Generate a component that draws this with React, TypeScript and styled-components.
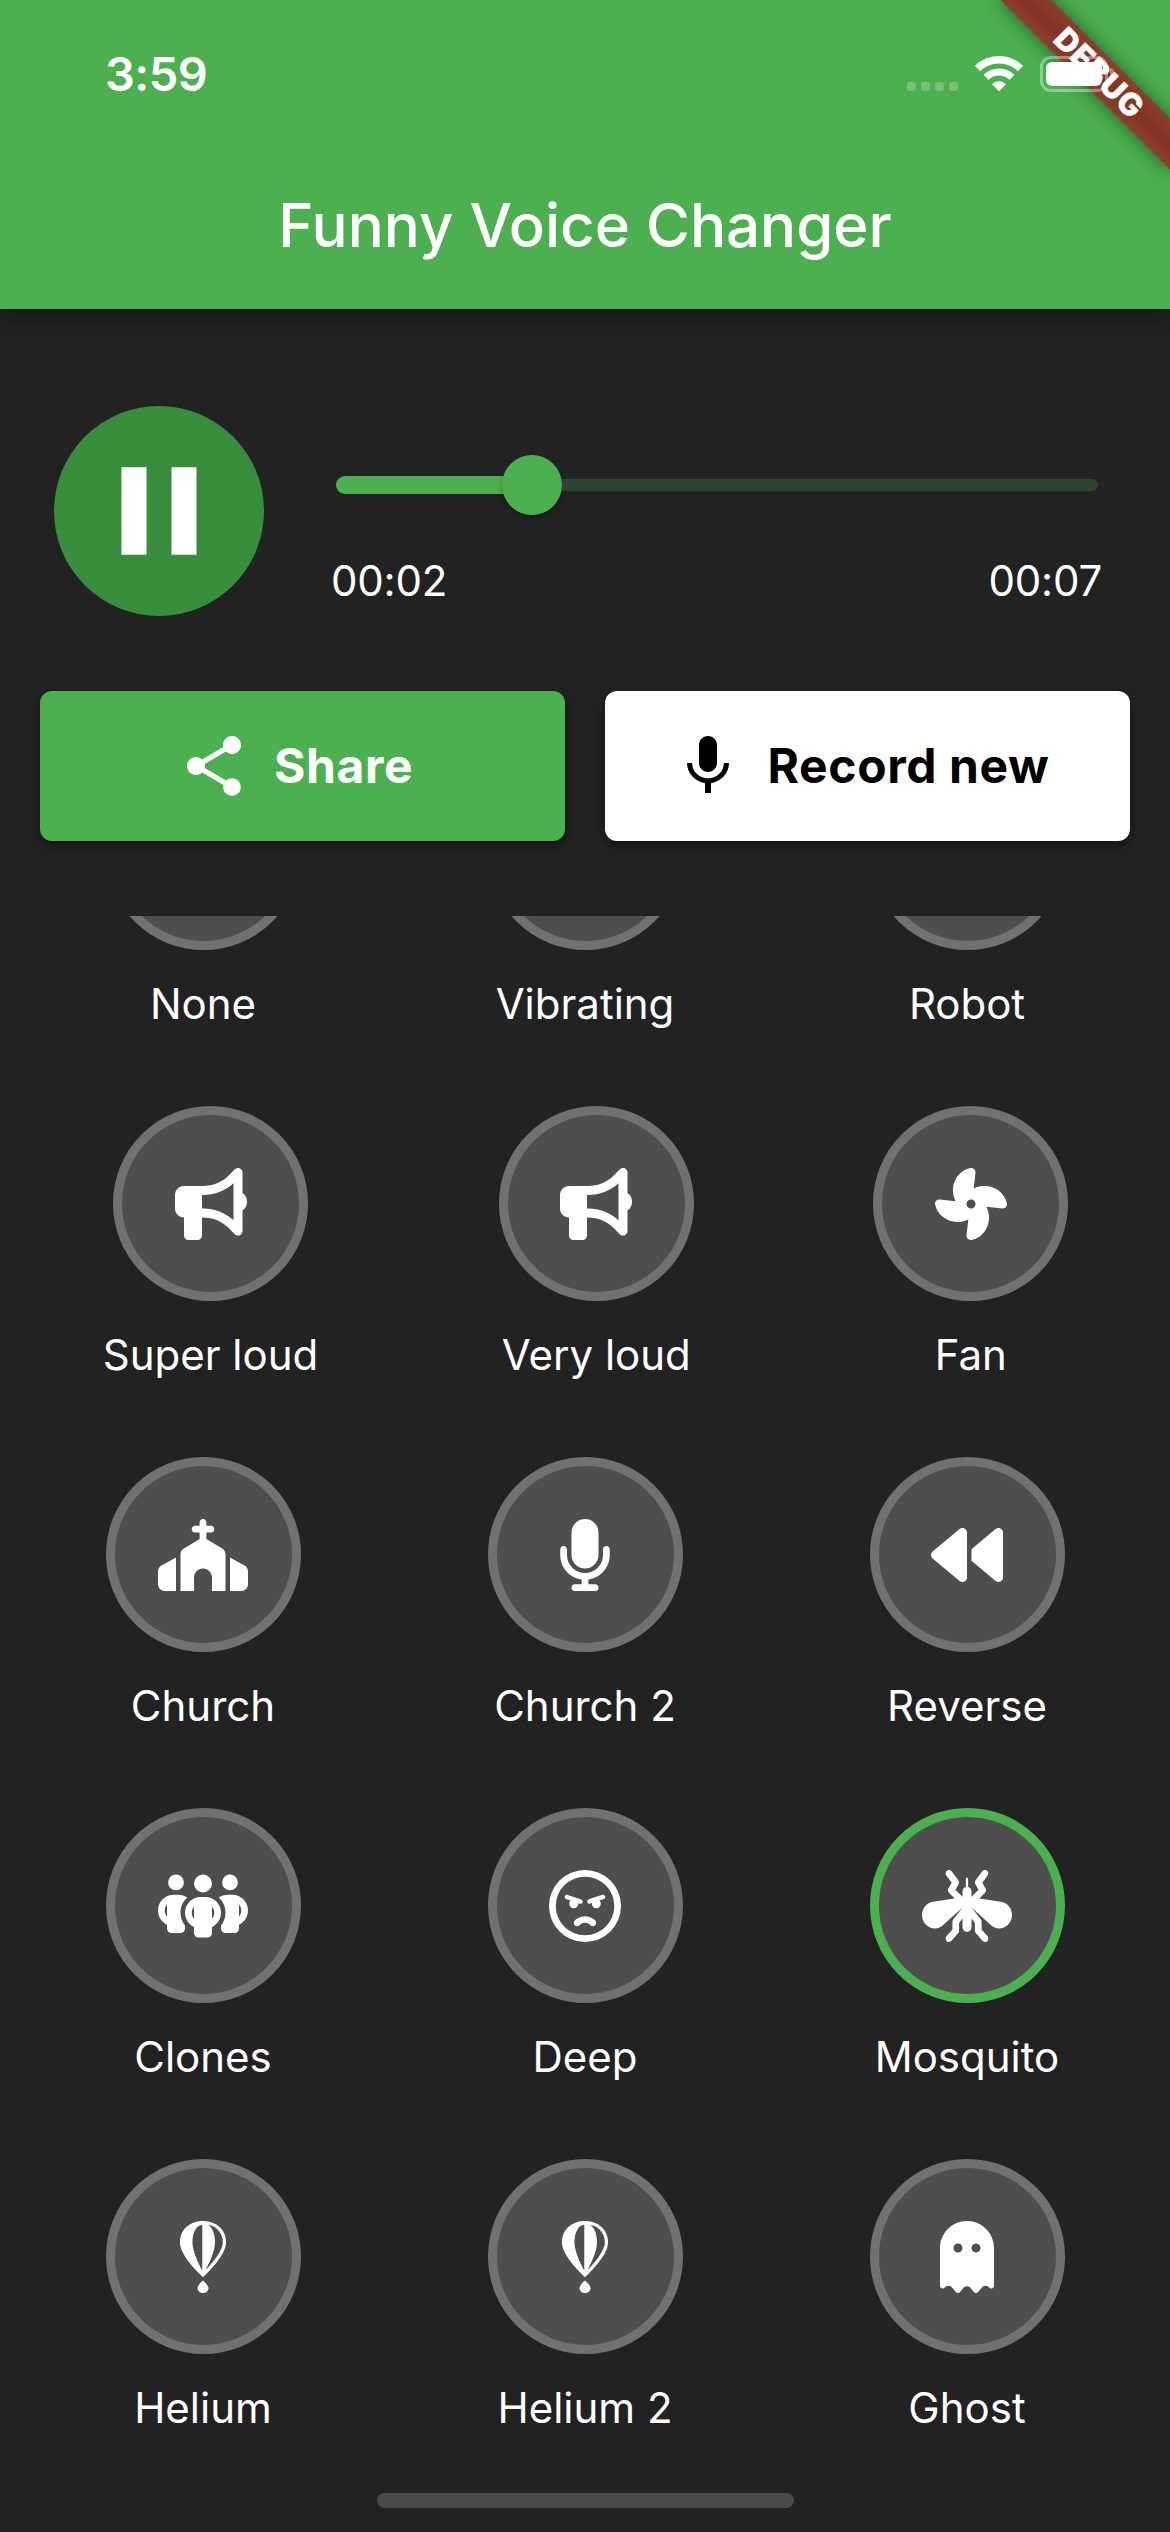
import React from 'react';
import styled, { createGlobalStyle } from 'styled-components';
import type { IconType } from 'react-icons';
import {
  FaBackward,
  FaBullhorn,
  FaChurch,
  FaFan,
  FaFly,
  FaGhost,
  FaMicrophone,
  FaMosquito,
  FaPeopleGroup,
  FaRegFaceAngry,
} from 'react-icons/fa6';

const colors = {
  green: '#4caf50',
  darkGreen: '#388e3c',
  background: '#222222',
  disc: '#4e4e4e',
  ring: '#717171',
};

const GlobalStyle = createGlobalStyle`
  * { box-sizing: border-box; }
  body { margin: 0; background: ${colors.background}; }
`;

const Screen = styled.div`
  position: relative;
  width: 1170px;
  height: 2532px;
  display: flex;
  flex-direction: column;
  overflow: hidden;
  background: ${colors.background};
  color: #fff;
  font-family: Inter, 'Liberation Sans', sans-serif;
`;

const Header = styled.header`
  height: 309px;
  flex: none;
  display: flex;
  flex-direction: column;
  background: ${colors.green};
  box-shadow: 0 6px 12px -3px rgba(0, 0, 0, 0.14), 0 12px 15px rgba(0, 0, 0, 0.08),
    0 3px 30px rgba(0, 0, 0, 0.08);
`;

const StatusBar = styled.div`
  position: relative;
  z-index: 2;
  height: 141px;
  display: flex;
  justify-content: space-between;
  padding: 46px 56px 0 105px;
`;

const Clock = styled.time`
  margin-top: -1px;
  font-size: 47px;
  line-height: 58px;
  font-weight: 600;
  letter-spacing: -0.6px;
`;

const StatusIcons = styled.div`
  display: flex;
  align-items: flex-end;
  height: 46px;
`;

const SignalDots = styled.div`
  display: flex;
  gap: 5px;
  margin: 0 16px 1px 0;
`;

const SignalDot = styled.i`
  width: 9px;
  height: 9px;
  border-radius: 3px;
  background: rgba(255, 255, 255, 0.23);
`;

const WifiGlyph = styled.svg`
  width: 50px;
  height: 37px;
  margin-right: 16px;
`;

const Battery = styled.div`
  width: 68px;
  height: 36px;
  padding: 3px;
  border: 3px solid rgba(255, 255, 255, 0.38);
  border-radius: 11px;
`;

const BatteryLevel = styled.div`
  width: 56px;
  height: 24px;
  border-radius: 6px;
  background: #fff;
`;

const BatteryTip = styled.i`
  width: 4px;
  height: 12px;
  margin: 0 0 12px 2px;
  border-radius: 0 4px 4px 0;
  background: rgba(255, 255, 255, 0.38);
`;

const Title = styled.h1`
  margin: 0;
  height: 168px;
  text-align: center;
  font-size: 60px;
  line-height: 168px;
  font-weight: 500;
  letter-spacing: 0;
`;

const DebugBanner = styled.div`
  position: absolute;
  z-index: 1;
  top: 54px;
  left: 978px;
  width: 240px;
  height: 36px;
  transform: rotate(45deg);
  background: linear-gradient(#894029, #823425 50%, #894029);
  box-shadow: 0 0 18px rgba(0, 0, 0, 0.5);
  text-align: center;
  text-indent: 3px;
  font-size: 31.5px;
  line-height: 36px;
  font-weight: 900;
  letter-spacing: 0.6px;
`;

const Player = styled.section`
  display: flex;
  padding: 97px 68px 0 54px;
  height: 382px;
  flex: none;
`;

const PlayButton = styled.button`
  width: 210px;
  height: 210px;
  padding: 0;
  border: 0;
  border-radius: 50%;
  display: grid;
  place-items: center;
  background: ${colors.darkGreen};
  svg {
    width: 150px;
    height: 150px;
    fill: #fff;
  }
`;

const Timeline = styled.div`
  flex: 1;
  margin-left: 67px;
  padding-top: 49px;
`;

const Slider = styled.div`
  display: flex;
  align-items: center;
  height: 60px;
  padding: 0 4px 0 5px;
`;

const Played = styled.div`
  width: 169px;
  height: 18px;
  border-radius: 9px 0 0 9px;
  background: ${colors.green};
`;

const Thumb = styled.div`
  width: 60px;
  height: 60px;
  margin-left: -3px;
  border-radius: 50%;
  background: ${colors.green};
  box-shadow: 0 3px 4px rgba(0, 0, 0, 0.28);
`;

const Remaining = styled.div`
  flex: 1;
  height: 12px;
  border-radius: 0 6px 6px 0;
  background: #2c432d;
`;

const Times = styled.div`
  display: flex;
  justify-content: space-between;
  margin-top: 41px;
  font-size: 42px;
  line-height: 50px;
  letter-spacing: -0.2px;
`;

const Actions = styled.section`
  display: grid;
  grid-template-columns: 1fr 1fr;
  gap: 40px;
  height: 225px;
  flex: none;
  padding: 0 40px;
`;

const ActionButton = styled.button<{ $primary?: boolean }>`
  height: 150px;
  border: 0;
  border-radius: 12px;
  padding: 0 14px 0 0;
  display: flex;
  align-items: center;
  justify-content: center;
  gap: 24px;
  background: ${(p) => (p.$primary ? colors.green : '#fff')};
  color: ${(p) => (p.$primary ? '#fff' : '#000')};
  box-shadow: 0 3px 6px rgba(0, 0, 0, 0.3), 0 6px 9px rgba(0, 0, 0, 0.15);
  font: 700 48px/58px Inter, 'Liberation Sans', sans-serif;
  letter-spacing: 0.6px;
  svg {
    width: 72px;
    height: 72px;
    fill: currentColor;
  }
`;

const Effects = styled.main`
  flex: 1;
  min-height: 0;
  overflow: hidden;
`;

const EffectList = styled.div`
  margin-top: -161px;
  padding: 0 12px;
`;

const EffectRow = styled.div`
  display: flex;
  justify-content: space-around;
  height: 351px;
`;

const Effect = styled.div`
  min-width: 195px;
  display: flex;
  flex-direction: column;
  align-items: center;
`;

const Disc = styled.div<{ $selected?: boolean }>`
  width: 195px;
  height: 195px;
  flex: none;
  display: grid;
  place-items: center;
  border-radius: 50%;
  border: 9px solid ${(p) => (p.$selected ? colors.green : colors.ring)};
  background: ${colors.disc};
  svg {
    width: 90px;
    height: 72px;
  }
`;

const Label = styled.span`
  margin-top: 29px;
  padding: 0 1px;
  font-size: 42px;
  line-height: 50px;
  letter-spacing: 0;
  white-space: nowrap;
`;

const HomeIndicator = styled.div`
  position: absolute;
  left: 377px;
  bottom: 24px;
  width: 417px;
  height: 15px;
  border-radius: 8px;
  background: #4a4a4a;
`;

type EffectItem = { name: string; icon?: IconType; selected?: boolean };

const rows: EffectItem[][] = [
  [{ name: 'None' }, { name: 'Vibrating' }, { name: 'Robot' }],
  [
    { name: 'Super loud', icon: FaBullhorn },
    { name: 'Very loud', icon: FaBullhorn },
    { name: 'Fan', icon: FaFan },
  ],
  [
    { name: 'Church', icon: FaChurch },
    { name: 'Church 2', icon: FaMicrophone },
    { name: 'Reverse', icon: FaBackward },
  ],
  [
    { name: 'Clones', icon: FaPeopleGroup },
    { name: 'Deep', icon: FaRegFaceAngry },
    { name: 'Mosquito', icon: FaMosquito, selected: true },
  ],
  [
    { name: 'Helium', icon: FaFly },
    { name: 'Helium 2', icon: FaFly },
    { name: 'Ghost', icon: FaGhost },
  ],
];

const Wifi = () => (
  <WifiGlyph viewBox="0 0 50 37" fill="none" stroke="#fff">
    <path d="M3.5 13.5C15.5 1.8 34.500 1.8 46.500 13.500" strokeWidth="7.500" />
    <path d="M12 22.300C19.500 15.200 30.500 15.200 38 22.300" strokeWidth="7" />
    <path d="M18 29.200C22 25.300 28 25.300 32 29.200L25 36.300Z" fill="#fff" stroke="none" />
  </WifiGlyph>
);

export default function App() {
  return (
    <Screen>
      <GlobalStyle />
      <Header>
        <StatusBar>
          <Clock>3:59</Clock>
          <StatusIcons>
            <SignalDots>
              <SignalDot />
              <SignalDot />
              <SignalDot />
              <SignalDot />
            </SignalDots>
            <Wifi />
            <Battery>
              <BatteryLevel />
            </Battery>
            <BatteryTip />
          </StatusIcons>
        </StatusBar>
        <Title>Funny Voice Changer</Title>
      </Header>
      <DebugBanner>DEBUG</DebugBanner>

      <Player>
        <PlayButton aria-label="Pause">
          <svg viewBox="0 0 24 24">
            <path d="M6 19h4V5H6v14zm8-14v14h4V5h-4z" />
          </svg>
        </PlayButton>
        <Timeline>
          <Slider>
            <Played />
            <Thumb />
            <Remaining />
          </Slider>
          <Times>
            <span>00:02</span>
            <span>00:07</span>
          </Times>
        </Timeline>
      </Player>

      <Actions>
        <ActionButton $primary>
          <svg viewBox="0 0 24 24">
            <path d="M18 16.080c-.76 0-1.440.3-1.960.77L8.910 12.700c.05-.23.090-.46.090-.7s-.04-.47-.09-.7l7.050-4.110c.54.5 1.250.81 2.040.81 1.660 0 3-1.340 3-3s-1.340-3-3-3-3 1.340-3 3c0 .24.040.47.090.7L8.040 9.810C7.500 9.310 6.790 9 6 9c-1.660 0-3 1.340-3 3s1.340 3 3 3c.79 0 1.500-.31 2.040-.81l7.120 4.160c-.05.21-.08.43-.08.65 0 1.610 1.310 2.920 2.920 2.920 1.610 0 2.920-1.310 2.920-2.920s-1.310-2.920-2.920-2.920z" />
          </svg>
          <span>Share</span>
        </ActionButton>
        <ActionButton>
          <svg viewBox="0 0 24 24">
            <path d="M12 14c1.660 0 2.990-1.340 2.990-3L15 5c0-1.660-1.340-3-3-3S9 3.340 9 5v6c0 1.660 1.340 3 3 3zm5.300-3c0 3-2.540 5.100-5.300 5.100S6.700 14 6.700 11H5c0 3.410 2.720 6.230 6 6.720V21h2v-3.280c3.280-.48 6-3.300 6-6.720h-1.700z" />
          </svg>
          <span>Record new</span>
        </ActionButton>
      </Actions>

      <Effects>
        <EffectList>
          {rows.map((row, index) => (
            <EffectRow key={index}>
              {row.map(({ name, icon: Icon, selected }) => (
                <Effect key={name}>
                  <Disc $selected={selected}>{Icon && <Icon />}</Disc>
                  <Label>{name}</Label>
                </Effect>
              ))}
            </EffectRow>
          ))}
        </EffectList>
      </Effects>
      <HomeIndicator />
    </Screen>
  );
}
